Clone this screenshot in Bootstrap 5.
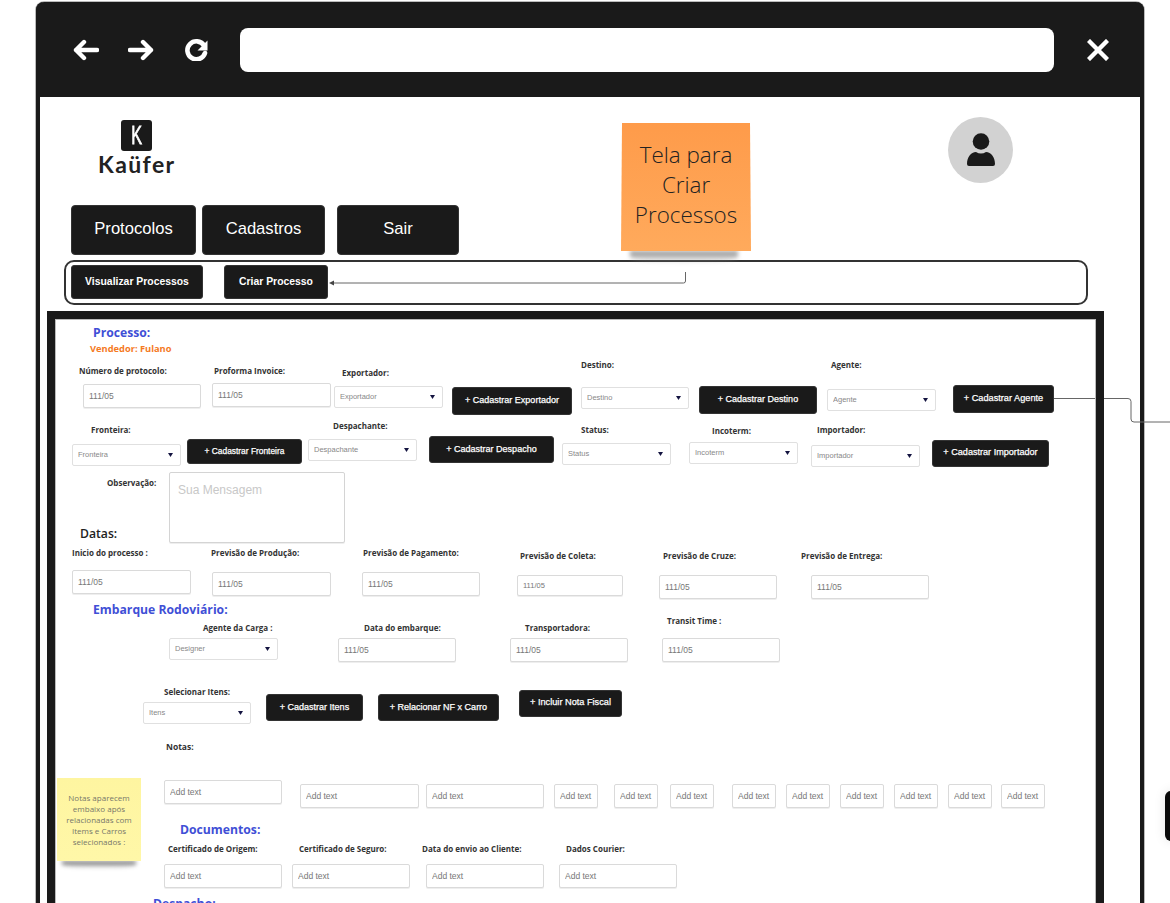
<!DOCTYPE html>
<html lang="pt-BR">
<head>
<meta charset="utf-8">
<title>Tela para Criar Processos</title>
<link href="https://cdn.jsdelivr.net/npm/bootstrap@5.3.0/dist/css/bootstrap.min.css" rel="stylesheet">
<style>
html,body{margin:0;background:#fff;overflow:hidden}
.board{position:relative;width:1170px;height:903px;overflow:hidden;background:#fff}
.shell{position:absolute;left:36px;top:2px;width:1108px;height:1000px;border:solid #1a1a1a;border-width:0 4px;border-radius:8px 8px 0 0;box-shadow:0 0 0 1px #bbb;background:#fff}
.toolbar{height:95px;margin:0 -4px;padding:1px 35px 0 37px;background:#1a1a1a;border-radius:8px 8px 0 0;gap:29px}
.urlbar{width:814px;height:44px;margin:0 4px 0 2px;background:#fff;border-radius:8px}
.sheet{position:absolute;left:47px;top:311px;width:1057px;height:760px;border:8px solid #1a1a1a;box-shadow:inset 0 0 0 1px #bbb}
.wires{position:absolute;left:0;top:0}
.ink-btn{position:absolute;display:flex;align-items:center;justify-content:center;padding:0 0 1px;border:1px solid #333;border-radius:3px;background:#1a1a1a;color:#fff;font-family:"Liberation Sans",Arial,sans-serif;font-size:9px;line-height:1;white-space:nowrap;-webkit-text-stroke:.25px #fff}
.ink-btn:hover{background:#1a1a1a;color:#fff;border-color:#333}
.ink-btn.top{font-size:16.6px;padding-bottom:1px;-webkit-text-stroke:0;border-radius:4px}
.ink-btn.sub{font-size:10.4px;font-weight:700;padding:0;-webkit-text-stroke:0}
.tag{position:absolute;margin:0;font-family:"Open Sans",sans-serif;font-weight:700;font-size:8px;line-height:12px;color:#333;white-space:nowrap}
.head{position:absolute;margin:0;font-family:"Open Sans",sans-serif;font-weight:700;font-size:12.2px;line-height:16px;color:#3f4fd6;white-space:nowrap}
.board .form-control{position:absolute;padding:0 5px;min-height:0;border:1.5px solid #dadada;border-radius:2px;font-family:"Liberation Sans",Arial,sans-serif;font-size:8.5px;color:#777;background:#fff;box-shadow:0 1px 0 #eee}
.board .form-select{position:absolute;padding:0 16px 0 5px;min-height:0;border:1.5px solid #e0e0e0;border-radius:2px;font-family:"Liberation Sans",Arial,sans-serif;font-size:7.5px;color:#888;background-color:#fff;background-size:5px 3.5px;background-position:right 7px center;background-image:url("data:image/svg+xml,%3Csvg xmlns='http://www.w3.org/2000/svg' viewBox='0 0 6 4'%3E%3Cpath d='M0 0h6L3 4z' fill='%23141440'/%3E%3C/svg%3E")}
.board textarea.form-control{padding:8px 8px;font-size:12px;resize:none;color:#333;border-color:#d4d4d4;overflow:hidden}
.board textarea.form-control::placeholder{color:#c8c8c8;opacity:1}
.logo-box{position:absolute;left:121px;top:120px;width:31px;height:31px;background:#1a1a1a;border-radius:3px;color:#fff;font-family:"Liberation Sans",Arial,sans-serif;font-size:26px;line-height:31px;text-align:center}
.logo-box span{display:inline-block;transform:scaleX(.62);-webkit-text-stroke:.8px #fff}
.logo-word{position:absolute;left:98px;top:149px;margin:0;font-family:Lato,sans-serif;font-weight:700;font-size:23px;line-height:30px;letter-spacing:1.4px;color:#222}
.avatar{position:absolute;left:948px;top:117px;width:65px;height:66px;border-radius:50%;background:#d2d2d2}
.note-orange{position:absolute;left:621px;top:123px;width:130px;height:128px;display:flex;align-items:center;justify-content:center;padding-bottom:5px;text-align:center;font-family:"Open Sans",sans-serif;font-weight:300;font-size:22.4px;line-height:30px;color:#222;background:linear-gradient(180deg,#fe9b4a,#ffaa5c);clip-path:polygon(1px 0,129px 0,130px 128px,0 128px)}
.note-yellow{position:absolute;left:57px;top:778px;width:84px;height:83px;display:flex;align-items:center;justify-content:center;text-align:center;font-family:"Open Sans",sans-serif;font-size:8px;line-height:11px;color:#77776a;background:linear-gradient(180deg,#fef5a0,#fff7a8)}
.shade{position:absolute;height:7px;background:linear-gradient(180deg,#555,rgba(120,120,120,0));filter:blur(2px);border-radius:0 0 50% 50%}
.shade-o{left:630px;top:251px;width:108px;height:12px;background:linear-gradient(180deg,#8a8a8a,rgba(160,160,160,0))}
.shade-y{left:62px;top:861px;width:74px}
.subnav{position:absolute;left:64px;top:260px;width:1024px;height:45px;border:2px solid #333;border-radius:10px}
.edge-tab{position:absolute;left:1165px;top:791px;width:20px;height:50px;background:#0a0a0a;border-radius:6px;box-shadow:0 0 12px rgba(0,0,0,.1)}

#b1{left:71px;top:205px;width:125px;height:50px}#b2{left:202px;top:205px;width:123px;height:50px}#b3{left:337px;top:205px;width:122px;height:50px}
#b4{left:71px;top:265px;width:132px;height:34px}#b5{left:224px;top:265px;width:104px;height:34px}
#b6{left:452px;top:387px;width:120px;height:28px}#b7{left:699px;top:386px;width:118px;height:28px}#b8{left:953px;top:385px;width:101px;height:28px;font-size:9.2px}
#b9{left:187px;top:439px;width:115px;height:25px;font-size:8.4px}#b10{left:429px;top:436px;width:125px;height:27px}#b11{left:932px;top:440px;width:117px;height:27px;font-size:9.1px}
#b12{left:266px;top:694px;width:97px;height:27px}#b13{left:378px;top:694px;width:121px;height:27px}#b14{left:519px;top:690px;width:103px;height:27px;font-size:9.2px}

#h1{left:93px;top:325px}#h2{left:93px;top:602px}#h3{left:180px;top:822px}#h4{left:153px;top:896px}
#h5{left:80px;top:526px;color:#222;font-weight:600}
#v1{left:90px;top:343px;color:#f57a1f;font-size:9.3px}

#t1{left:79px;top:365px}#t2{left:214px;top:365px}#t3{left:342px;top:367px}#t4{left:581px;top:359px}#t5{left:831px;top:359px}
#t6{left:91px;top:424px}#t7{left:333px;top:420px}#t8{left:581px;top:424px}#t9{left:712px;top:425px}#t10{left:817px;top:424px}
#t11{left:107px;top:477px}
#t12{left:72px;top:547px}#t13{left:211px;top:547px}#t14{left:363px;top:547px}#t15{left:520px;top:550px}#t16{left:663px;top:550px}#t17{left:801px;top:550px}
#t18{left:203px;top:622px}#t19{left:364px;top:622px}#t20{left:525px;top:622px}#t21{left:667px;top:615px}
#t22{left:164px;top:686px}#t23{left:166px;top:741px;font-size:8.5px}
#t24{left:168px;top:843px}#t25{left:299px;top:843px}#t26{left:422px;top:843px}#t27{left:566px;top:843px}

#i1{left:83px;top:384px;width:118px;height:24px}#i2{left:212px;top:383px;width:119px;height:24px}
#i3{left:72px;top:570px;width:119px;height:24px}#i4{left:212px;top:572px;width:119px;height:24px}#i5{left:362px;top:572px;width:118px;height:24px}#i6{left:517px;top:575px;width:106px;height:21px;font-size:7.5px}#i7{left:659px;top:575px;width:118px;height:24px}#i8{left:811px;top:575px;width:118px;height:24px}
#i9{left:338px;top:638px;width:118px;height:24px}#i10{left:510px;top:638px;width:118px;height:24px}#i11{left:662px;top:638px;width:118px;height:24px}
#n1{left:164px;top:780px;width:118px;height:24px}#n2{left:300px;top:784px;width:119px;height:24px}#n3{left:426px;top:784px;width:118px;height:24px}
#n4{left:554px;top:784px;width:44px;height:24px}#n5{left:614px;top:784px;width:44px;height:24px}#n6{left:670px;top:784px;width:44px;height:24px}#n7{left:732px;top:784px;width:44px;height:24px}#n8{left:786px;top:784px;width:44px;height:24px}#n9{left:840px;top:784px;width:44px;height:24px}#n10{left:894px;top:784px;width:44px;height:24px}#n11{left:948px;top:784px;width:44px;height:24px}#n12{left:1001px;top:784px;width:44px;height:24px}
#d1{left:164px;top:864px;width:118px;height:24px}#d2{left:292px;top:864px;width:118px;height:24px}#d3{left:426px;top:864px;width:118px;height:24px}#d4{left:559px;top:864px;width:118px;height:24px}

#s1{left:334px;top:386px;width:109px;height:22px}#s2{left:581px;top:387px;width:108px;height:22px}#s3{left:827px;top:389px;width:109px;height:22px}
#s4{left:72px;top:444px;width:109px;height:22px}#s5{left:308px;top:439px;width:109px;height:22px}#s6{left:562px;top:443px;width:109px;height:22px}#s7{left:689px;top:442px;width:109px;height:22px}#s8{left:811px;top:445px;width:109px;height:22px}
#s9{left:169px;top:638px;width:109px;height:22px}#s10{left:143px;top:702px;width:108px;height:22px}
#obs{left:169px;top:472px;width:176px;height:71px}
</style>
</head>
<body>
<div class="board">
  <div class="shell">
    <div class="toolbar d-flex align-items-center">
      <svg width="26" height="22" viewBox="0 0 26 22" fill="none" stroke="#fff" stroke-width="4.4" stroke-linecap="round" stroke-linejoin="round" aria-label="Voltar"><path d="M24 11H3M11 3l-8 8 8 8"/></svg>
      <svg width="26" height="22" viewBox="0 0 26 22" fill="none" stroke="#fff" stroke-width="4.4" stroke-linecap="round" stroke-linejoin="round" aria-label="Avançar"><path d="M2 11h21M15 3l8 8-8 8"/></svg>
      <svg width="26" height="22" viewBox="0 0 26 22" aria-label="Recarregar"><path d="M21 6.5A9 9 0 1 0 22 14" fill="none" stroke="#fff" stroke-width="4.6" stroke-linecap="round"/><path d="M24.5 1.5v10h-10z" fill="#fff"/></svg>
      <div class="urlbar"></div>
      <svg width="22" height="22" viewBox="0 0 22 22" fill="none" stroke="#fff" stroke-width="4.4" stroke-linecap="square" aria-label="Fechar"><path d="M3 3l16 16M19 3L3 19"/></svg>
    </div>
  </div>
  <svg class="wires" width="1170" height="903" aria-hidden="true" fill="none" stroke="#666" stroke-width="1">
    <path d="M1054 398.5H1128q3 0 3 3V419q0 3 3 3h36"/>
  </svg>
  <div class="sheet"></div>

  <div class="logo-box"><span>K</span></div>
  <p class="logo-word">Kaüfer</p>
  <div class="avatar d-flex align-items-center justify-content-center">
    <svg width="30" height="34" viewBox="0 0 30 34" fill="#1a1a1a" aria-label="Usuário"><circle cx="15" cy="8.5" r="8.3"/><path d="M1 31c0-7 4-12 9-12q5 3 10 0c5 0 9 5 9 12q0 2-2 2H3q-2 0-2-2z"/></svg>
  </div>

  <a href="#" class="btn ink-btn top" id="b1">Protocolos</a>
  <a href="#" class="btn ink-btn top" id="b2">Cadastros</a>
  <a href="#" class="btn ink-btn top" id="b3">Sair</a>
  <div class="subnav"></div>
  <a href="#" class="btn ink-btn sub" id="b4">Visualizar Processos</a>
  <a href="#" class="btn ink-btn sub" id="b5">Criar Processo</a>

  <div class="shade shade-o"></div>
  <div class="note-orange">Tela para<br>Criar<br>Processos</div>
  <svg class="wires" width="1170" height="903" aria-hidden="true" fill="none" stroke="#666" stroke-width="1">
    <path d="M685.5 272v9q0 2-2 2H333"/><path d="M329 283l5-2.5v5z" fill="#444" stroke="none"/>
  </svg>

  <h2 class="head" id="h1">Processo:</h2>
  <p class="tag" id="v1">Vendedor: Fulano</p>

  <label class="tag" id="t1">Número de protocolo:</label><input class="form-control" id="i1" value="111/05">
  <label class="tag" id="t2">Proforma Invoice:</label><input class="form-control" id="i2" value="111/05">
  <label class="tag" id="t3">Exportador:</label><select class="form-select" id="s1"><option>Exportador</option></select>
  <a href="#" class="btn ink-btn" id="b6">+ Cadastrar Exportador</a>
  <label class="tag" id="t4">Destino:</label><select class="form-select" id="s2"><option>Destino</option></select>
  <a href="#" class="btn ink-btn" id="b7">+ Cadastrar Destino</a>
  <label class="tag" id="t5">Agente:</label><select class="form-select" id="s3"><option>Agente</option></select>
  <a href="#" class="btn ink-btn" id="b8">+ Cadastrar Agente</a>

  <label class="tag" id="t6">Fronteira:</label><select class="form-select" id="s4"><option>Fronteira</option></select>
  <a href="#" class="btn ink-btn" id="b9">+ Cadastrar Fronteira</a>
  <label class="tag" id="t7">Despachante:</label><select class="form-select" id="s5"><option>Despachante</option></select>
  <a href="#" class="btn ink-btn" id="b10">+ Cadastrar Despacho</a>
  <label class="tag" id="t8">Status:</label><select class="form-select" id="s6"><option>Status</option></select>
  <label class="tag" id="t9">Incoterm:</label><select class="form-select" id="s7"><option>Incoterm</option></select>
  <label class="tag" id="t10">Importador:</label><select class="form-select" id="s8"><option>Importador</option></select>
  <a href="#" class="btn ink-btn" id="b11">+ Cadastrar Importador</a>

  <label class="tag" id="t11">Observação:</label><textarea class="form-control" id="obs" placeholder="Sua Mensagem"></textarea>

  <h2 class="head" id="h5">Datas:</h2>
  <label class="tag" id="t12">Inicio do processo :</label><input class="form-control" id="i3" value="111/05">
  <label class="tag" id="t13">Previsão de Produção:</label><input class="form-control" id="i4" value="111/05">
  <label class="tag" id="t14">Previsão de Pagamento:</label><input class="form-control" id="i5" value="111/05">
  <label class="tag" id="t15">Previsão de Coleta:</label><input class="form-control" id="i6" value="111/05">
  <label class="tag" id="t16">Previsão de Cruze:</label><input class="form-control" id="i7" value="111/05">
  <label class="tag" id="t17">Previsão de Entrega:</label><input class="form-control" id="i8" value="111/05">

  <h2 class="head" id="h2">Embarque Rodoviário:</h2>
  <label class="tag" id="t18">Agente da Carga :</label><select class="form-select" id="s9"><option>Designer</option></select>
  <label class="tag" id="t19">Data do embarque:</label><input class="form-control" id="i9" value="111/05">
  <label class="tag" id="t20">Transportadora:</label><input class="form-control" id="i10" value="111/05">
  <label class="tag" id="t21">Transit Time :</label><input class="form-control" id="i11" value="111/05">

  <label class="tag" id="t22">Selecionar Itens:</label><select class="form-select" id="s10"><option>Itens</option></select>
  <a href="#" class="btn ink-btn" id="b12">+ Cadastrar Itens</a>
  <a href="#" class="btn ink-btn" id="b13">+ Relacionar NF x Carro</a>
  <a href="#" class="btn ink-btn" id="b14">+ Incluir Nota Fiscal</a>

  <label class="tag" id="t23">Notas:</label>
  <input class="form-control" id="n1" value="Add text"><input class="form-control" id="n2" value="Add text"><input class="form-control" id="n3" value="Add text"><input class="form-control" id="n4" value="Add text"><input class="form-control" id="n5" value="Add text"><input class="form-control" id="n6" value="Add text"><input class="form-control" id="n7" value="Add text"><input class="form-control" id="n8" value="Add text"><input class="form-control" id="n9" value="Add text"><input class="form-control" id="n10" value="Add text"><input class="form-control" id="n11" value="Add text"><input class="form-control" id="n12" value="Add text">

  <div class="shade shade-y"></div>
  <div class="note-yellow">Notas aparecem<br>embaixo após<br>relacionadas com<br>Items e Carros<br>selecionados :</div>

  <h2 class="head" id="h3">Documentos:</h2>
  <label class="tag" id="t24">Certificado de Origem:</label><input class="form-control" id="d1" value="Add text">
  <label class="tag" id="t25">Certificado de Seguro:</label><input class="form-control" id="d2" value="Add text">
  <label class="tag" id="t26">Data do envio ao Cliente:</label><input class="form-control" id="d3" value="Add text">
  <label class="tag" id="t27">Dados Courier:</label><input class="form-control" id="d4" value="Add text">
  <h2 class="head" id="h4">Despacho:</h2>

  <div class="edge-tab"></div>
</div>
<script src="https://cdn.jsdelivr.net/npm/bootstrap@5.3.0/dist/js/bootstrap.bundle.min.js"></script>
</body>
</html>
